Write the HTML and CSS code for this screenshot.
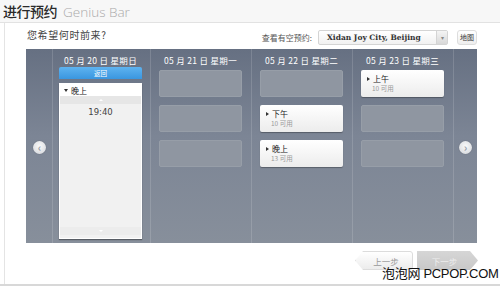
FILE: index.html
```html
<!DOCTYPE html>
<html lang="zh">
<head>
<meta charset="utf-8">
<link rel="stylesheet" href="styles.css">
</head>
<body>
<div class="page">
  <div class="header">
    <h1 class="title"><span class="cn">进行预约</span><span class="gb">Genius Bar</span></h1>
  </div>
  <div class="main">
    <div class="toolbar">
      <div class="question">您希望何时前来?</div>
      <div class="store">
        <span class="store-label">查看有空预约:</span>
        <div class="select"><span class="select-text">Xidan Joy City, Beijing</span><span class="select-btn">▾</span></div>
        <div class="map-btn">地图</div>
      </div>
    </div>
    <div class="calendar">
      <div class="gutter gutter-left"><span class="nav">‹</span></div>
      <div class="col col-first">
        <div class="date">05 月 20 日 星期日</div>
        <div class="back">返回</div>
        <div class="day-card">
          <div class="period"><span class="tri down"></span>晚上</div>
          <div class="strip"><span class="dot up"></span></div>
          <div class="time">19:40</div>
          <div class="spacer"></div>
          <div class="strip strip-bottom"><span class="dot down"></span></div>
        </div>
      </div>
      <div class="col">
        <div class="date">05 月 21 日 星期一</div>
        <div class="slots">
          <div class="slot empty"></div>
          <div class="slot empty"></div>
          <div class="slot empty"></div>
        </div>
      </div>
      <div class="col">
        <div class="date">05 月 22 日 星期二</div>
        <div class="slots">
          <div class="slot empty"></div>
          <div class="slot"><div class="slot-name"><span class="tri right"></span>下午</div><div class="slot-count">10 可用</div></div>
          <div class="slot"><div class="slot-name"><span class="tri right"></span>晚上</div><div class="slot-count">13 可用</div></div>
        </div>
      </div>
      <div class="col">
        <div class="date">05 月 23 日 星期三</div>
        <div class="slots">
          <div class="slot"><div class="slot-name"><span class="tri right"></span>上午</div><div class="slot-count">10 可用</div></div>
          <div class="slot empty"></div>
          <div class="slot empty"></div>
        </div>
      </div>
      <div class="gutter gutter-right"><span class="nav">›</span></div>
    </div>
    <div class="footer">
      <div class="btn btn-prev">上一步</div>
      <div class="btn btn-next">下一步</div>
    </div>
  </div>
  <div class="watermark">泡泡网 PCPOP.COM</div>
</div>
</body>
</html>
```
FILE: styles.css
```css
* { box-sizing: border-box; }
html, body { margin: 0; padding: 0; }
body {
  width: 500px;
  height: 286px;
  overflow: hidden;
  background: #fff;
  font-family: "Noto Sans CJK SC", "Liberation Sans", sans-serif;
}
.page {
  position: relative;
  width: 500px;
  height: 286px;
  overflow: hidden;
  border-bottom: 2px solid #d8d8d8;
}
.header {
  height: 23px;
  background: #f7f7f7;
  border-bottom: 1px solid #e2e2e2;
}
.title {
  margin: 0;
  padding: 2px 0 0 3px;
  font-weight: normal;
  display: flex;
  align-items: baseline;
  line-height: 18px;
}
.title .cn {
  font-size: 14px;
  color: #2a2a2a;
  letter-spacing: -0.5px;
  font-weight: 500;
}
.title .gb {
  font-family: "Open Sans", "Liberation Sans", sans-serif;
  font-size: 13.5px;
  font-weight: 300;
  color: #aaa;
  margin-left: 6px;
}
.main {
  margin-left: 4px;
  border-left: 1px solid #e4e4e4;
  height: 261px;
  display: flex;
  flex-direction: column;
}
.toolbar {
  height: 26px;
  display: flex;
  align-items: center;
  justify-content: space-between;
  padding: 2px 23px 0 22px;
}
.question {
  font-size: 10px;
  color: #444;
  letter-spacing: 0.6px;
  margin-top: -6px;
}
.store {
  display: flex;
  align-items: center;
}
.store-label {
  font-size: 8px;
  color: #555;
  margin-right: 6px;
}
.select {
  width: 130px;
  height: 15px;
  border: 1px solid #d4d4d4;
  border-radius: 2px;
  background: linear-gradient(#fff, #f1f1f1);
  display: flex;
  align-items: center;
  justify-content: space-between;
}
.select-text {
  font-family: "DejaVu Serif", "Liberation Serif", serif;
  font-weight: bold;
  font-size: 7.5px;
  color: #333;
  padding-left: 8px;
}
.select-btn {
  width: 11px;
  height: 13px;
  background: linear-gradient(#f4f4f4, #d8d8d8);
  border-left: 1px solid #d4d4d4;
  font-size: 6px;
  color: #888;
  display: flex;
  align-items: center;
  justify-content: center;
}
.map-btn {
  margin-left: 9px;
  width: 20px;
  height: 15px;
  border: 1px solid #ddd;
  border-radius: 3px;
  background: linear-gradient(#fff, #eee);
  font-size: 7px;
  color: #333;
  display: flex;
  align-items: center;
  justify-content: center;
}
.calendar {
  margin-left: 21px;
  width: 451px;
  height: 194px;
  background: linear-gradient(#667082, #7c8595 45%, #878f9b);
  display: flex;
}
.gutter {
  display: flex;
  align-items: center;
  justify-content: center;
}
.gutter-left { width: 26px; padding-left: 1px; }
.gutter-right { width: 24px; border-left: 1px solid rgba(255,255,255,0.14); }
.nav {
  width: 13px;
  height: 13px;
  border-radius: 50%;
  background: radial-gradient(circle at 50% 40%, #fafafa, #d0d3d8);
  box-shadow: 0 0 1px rgba(0,0,0,0.4);
  color: #9aa0aa;
  font-size: 11px;
  font-weight: bold;
  line-height: 12px;
  text-align: center;
  margin-top: 2px;
}
.col {
  width: 101px;
  border-left: 1px solid rgba(255,255,255,0.14);
  padding: 5px 9px 0 8px;
  display: flex;
  flex-direction: column;
}
.col-first { width: 98px; padding: 5px 8px 4px 6px; }
.date {
  height: 14px;
  font-size: 8.5px;
  color: #fff;
  text-align: center;
  line-height: 13px;
  letter-spacing: 0.3px;
  white-space: nowrap;
}
.back {
  margin-top: -1px;
  height: 12px;
  background: linear-gradient(#5eb3f0, #3a96e0);
  border-radius: 2px 2px 0 0;
  color: #fff;
  font-size: 6.5px;
  text-align: center;
  line-height: 12px;
}
.day-card {
  margin-top: 4px;
  flex: 1;
  background: #f1f1f1;
  border: 1px solid #fff;
  box-shadow: 0 1px 1px rgba(0,0,0,0.35);
  display: flex;
  flex-direction: column;
}
.period {
  background: #fff;
  height: 12px;
  font-size: 8px;
  color: #222;
  padding-left: 4px;
  display: flex;
  align-items: center;
}
.strip {
  height: 8px;
  background: #e6e6e6;
  display: flex;
  align-items: center;
  justify-content: center;
}
.strip-bottom { background: #ececec; margin-bottom: 3px; }
.dot {
  width: 0; height: 0;
  border-left: 2px solid transparent;
  border-right: 2px solid transparent;
}
.dot.up { border-bottom: 2px solid #fff; }
.dot.down { border-top: 2px solid #fff; }
.time {
  text-align: center;
  font-size: 8.5px;
  color: #444;
  line-height: 12px;
  margin-top: 2px;
  font-family: "DejaVu Sans", sans-serif;
}
.spacer { flex: 1; }
.tri {
  display: inline-block;
  width: 0; height: 0;
  margin-right: 3px;
}
.tri.down {
  border-left: 2px solid transparent;
  border-right: 2px solid transparent;
  border-top: 3px solid #333;
}
.tri.right {
  border-top: 2px solid transparent;
  border-bottom: 2px solid transparent;
  border-left: 3px solid #333;
}
.slots {
  margin-top: 2px;
  display: flex;
  flex-direction: column;
  gap: 8px;
}
.slot {
  height: 27px;
  border-radius: 2px;
  background: linear-gradient(#ffffff, #ececec);
  box-shadow: 0 1px 1px rgba(0,0,0,0.3);
  padding: 4px 0 0 6px;
}
.slot.empty {
  background: #8f96a1;
  box-shadow: none;
  border: 1px solid #979ea8;
}
.slot-name {
  font-size: 8px;
  color: #222;
  line-height: 10px;
  display: flex;
  align-items: center;
}
.slot-count {
  font-size: 6.5px;
  color: #999;
  line-height: 9px;
  padding-left: 5px;
}
.footer {
  display: flex;
  justify-content: flex-end;
  gap: 4px;
  padding: 8px 0 0 0;
  width: 473px;
}
.btn {
  height: 19px;
  font-size: 8.5px;
  display: flex;
  align-items: center;
  justify-content: center;
}
.btn-prev {
  width: 58px;
  color: #999;
  background: linear-gradient(#fff, #ececec);
  border: 1px solid #dcdcdc;
  border-radius: 3px;
  clip-path: polygon(8px 0, 100% 0, 100% 100%, 8px 100%, 0 50%);
  padding-left: 4px;
}
.btn-next {
  width: 61px;
  color: #eee;
  background: linear-gradient(#d6d6d6, #c8c8c8);
  clip-path: polygon(0 0, calc(100% - 8px) 0, 100% 50%, calc(100% - 8px) 100%, 0 100%);
  padding-right: 6px;
}
.watermark {
  position: absolute;
  left: 382px;
  top: 265px;
  white-space: nowrap;
  font-size: 13px;
  color: #111;
  font-family: "Liberation Sans", "Noto Sans CJK SC", sans-serif;
  letter-spacing: -0.3px;
  line-height: 18px;
}
```
